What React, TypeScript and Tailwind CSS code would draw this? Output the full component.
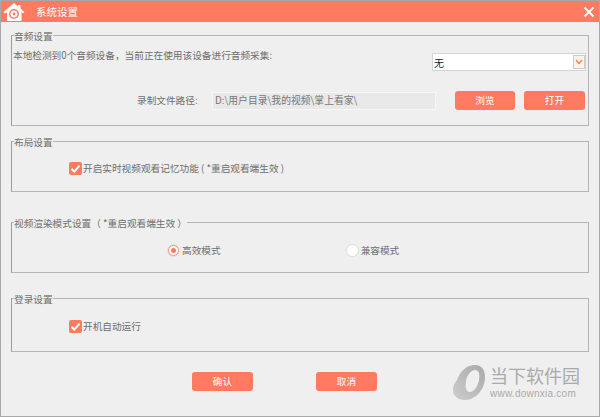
const font = { fontFamily: '"Noto Sans CJK SC", "Liberation Sans", sans-serif' };

function CheckBox() {
  return (
    <span className="flex h-[13px] w-[13px] shrink-0 items-center justify-center rounded-[2px] bg-[#ff7a60]">
      <svg width="11" height="11" viewBox="0 0 11 11" fill="none">
        <path d="M1.5 5.8 4.3 8.6 9.6 2.6" stroke="#fff" strokeWidth="2" />
      </svg>
    </span>
  );
}

function Radio({ checked }: { checked?: boolean }) {
  return (
    <span className="flex h-[13px] w-[13px] shrink-0 items-center justify-center rounded-full border border-[#ddd] bg-white">
      {checked && (
        <span className="flex h-[11px] w-[11px] items-center justify-center rounded-full border border-[#ff8a72]">
          <span className="h-[5px] w-[5px] rounded-full bg-[#ff7a60]" />
        </span>
      )}
    </span>
  );
}

function Group({ title, className, children }: { title: string; className: string; children: React.ReactNode }) {
  return (
    <fieldset className={`border border-[#b4b4b4] border-l-[#9c9c9c] ${className}`}>
      <legend className="ml-[2px] h-[12px] text-[9.67px] leading-[14px] text-[#6e6e6e]">{title}</legend>
      {children}
    </fieldset>
  );
}

export default function App() {
  return (
    <div style={font} className="relative flex h-[417px] w-[600px] flex-col overflow-hidden border border-[#a8a8a8] bg-[#efefef]">
      <div className="flex h-[21px] shrink-0 items-center bg-[#ff7a60] pl-[2px] pr-[4px]">
        <svg width="22" height="20" viewBox="0 0 22 20" fill="none">
          <path d="M0.500 10 11 1l4 3.400V3h2.500v3.500L21.500 10l-1.600 1.300-1.400-1V19H4v-8.700l-1.900 1.200z" fill="#fff" />
          <circle cx="11" cy="12" r="4.200" stroke="#ff7a60" strokeWidth="1.500" />
          <circle cx="11" cy="12" r="1.400" fill="#ff7a60" />
        </svg>
        <span className="ml-[11px] text-[10.5px] text-white">系统设置</span>
        <svg className="ml-auto" width="12" height="12" viewBox="0 0 12 12" fill="none">
          <path d="M1.500 1.500l9 9M10.500 1.500l-9 9" stroke="#fff" strokeWidth="2" />
        </svg>
      </div>

      <div className="flex flex-col px-[10px] pt-[7px]">
        <Group title="音频设置" className="h-[97px]">
          <div className="flex items-start justify-between pl-[1px] pr-[3px] pt-[7px]">
            <span className="text-[9.67px] leading-[14px] text-[#6e6e6e]">本地检测到0个音频设备，当前正在使用该设备进行音频采集:</span>
            <div className="mt-[6px] flex h-[16px] w-[152px] items-center justify-between bg-white pl-[1px] outline outline-[#d4d4d4]">
              <span className="text-[10px] text-[#222]">无</span>
              <span className="flex h-[14px] w-[12px] items-center justify-center border border-[#ccc] bg-[#fff3e6]">
                <svg width="8" height="6" viewBox="0 0 8 6" fill="none">
                  <path d="M1 1l3 3.500L7 1" stroke="#ff7a60" strokeWidth="1.300" />
                </svg>
              </span>
            </div>
          </div>
          <div className="mt-[21px] flex items-center pl-[125px] pr-[2px]">
            <span className="w-[75px] text-[9.67px] text-[#6e6e6e]">录制文件路径:</span>
            <div className="flex h-[18px] w-[224px] items-center border border-[#f6f6f6] bg-[#e9e9e9] px-[2px] text-[9.8px] text-[#777]">
              D:\用户目录\我的视频\掌上看家\
            </div>
            <button className="ml-[19px] h-[19px] w-[60px] rounded-[3px] bg-[#ff7a60] text-[9.67px] text-white">浏览</button>
            <button className="ml-[9px] h-[19px] w-[61px] rounded-[3px] bg-[#ff7a60] text-[9.67px] text-white">打开</button>
          </div>
        </Group>

        <Group title="布局设置" className="mt-[9px] h-[57px]">
          <div className="flex items-center pl-[57px] pt-[14px]">
            <CheckBox />
            <span className="ml-[1px] text-[9.67px] text-[#6e6e6e]">开启实时视频观看记忆功能 ( *重启观看端生效 )</span>
          </div>
        </Group>

        <Group title="视频渲染模式设置（ *重启观看端生效 ）" className="mt-[24px] h-[57px]">
          <div className="flex items-center pl-[155px] pt-[15px]">
            <Radio checked />
            <span className="ml-[2px] text-[9.67px] text-[#6e6e6e]">高效模式</span>
            <span className="ml-[125px]">
              <Radio />
            </span>
            <span className="ml-[2px] text-[9.67px] text-[#6e6e6e]">兼容模式</span>
          </div>
        </Group>

        <Group title="登录设置" className="mt-[19px] h-[60px]">
          <div className="flex items-center pl-[57px] pt-[15px]">
            <CheckBox />
            <span className="ml-[1px] text-[9.67px] text-[#6e6e6e]">开机自动运行</span>
          </div>
        </Group>

        <div className="mt-[20px] flex gap-[63px] pl-[181px]">
          <button className="h-[19px] w-[61px] rounded-[3px] bg-[#ff7a60] text-[9.67px] text-white">确认</button>
          <button className="h-[19px] w-[61px] rounded-[3px] bg-[#ff7a60] text-[9.67px] text-white">取消</button>
        </div>
      </div>

      {/* watermark */}
      <div className="absolute left-[449px] top-[362px] flex items-start">
        <svg width="37" height="38" viewBox="0 0 37 38">
          <defs>
            <linearGradient id="wm" x1="0" y1="1" x2="1" y2="0">
              <stop offset="0" stopColor="#cdcdcd" />
              <stop offset="1" stopColor="#a9a9a9" />
            </linearGradient>
          </defs>
          <path
            fillRule="evenodd"
            d="M25 2c7 0 10 5 10 12 0 12-9 23-20 23C8 37 3 33 3 27c0-4 1-6 4-10C10 8 17 2 25 2zm0 5c-4 0-8 5-9 11-1 6 0 11 4 11 4 0 8-6 9-12 1-6 0-10-4-10z"
            fill="url(#wm)"
          />
        </svg>
        <div className="ml-[3px] flex flex-col pt-[2px] text-[#aaa]">
          <span className="text-[18px] leading-[20px]">当下软件园</span>
          <span style={{ fontFamily: '"Liberation Sans", sans-serif' }} className="mt-[3px] text-[10px] leading-[11px] tracking-[0.25px]">
            www.downxia.com
          </span>
        </div>
      </div>
    </div>
  );
}
